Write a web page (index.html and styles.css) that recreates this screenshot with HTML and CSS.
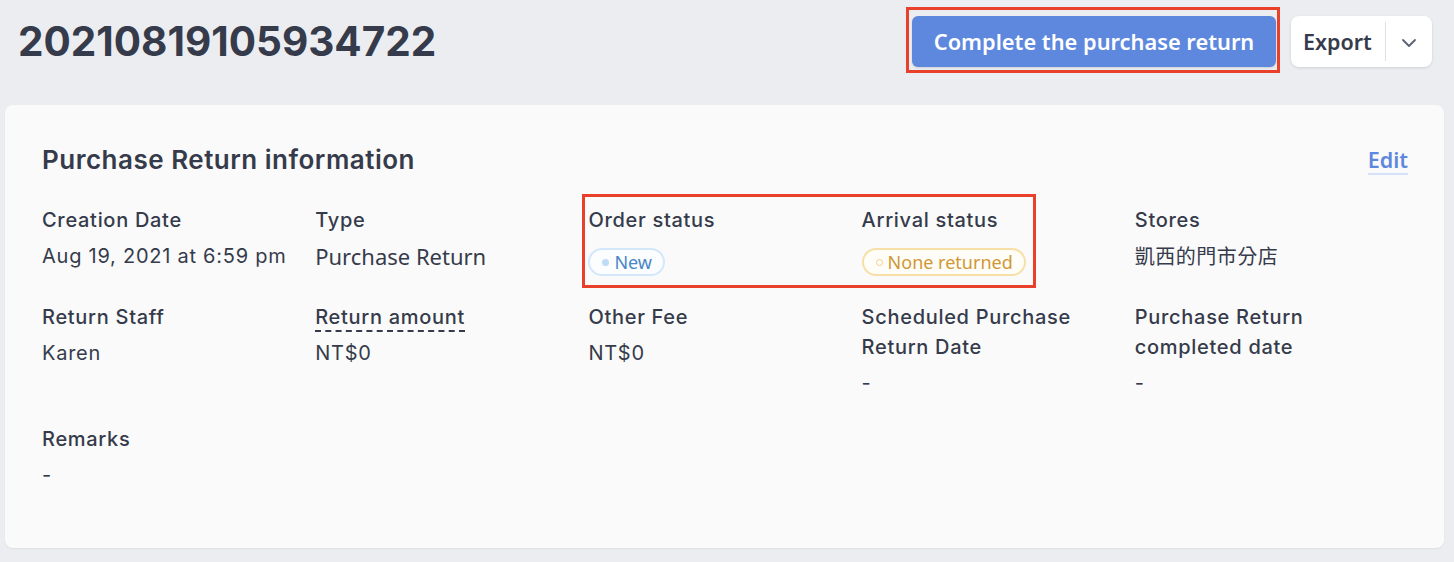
FILE: index.html
```html
<!DOCTYPE html>
<html lang="en">
<head>
<meta charset="utf-8">
<title>20210819105934722</title>
<link rel="stylesheet" href="styles.css">
</head>
<body>
<div class="page">
  <header class="header">
    <h1 class="order-no">20210819105934722</h1>
    <div class="actions">
      <div class="highlight-btn">
        <button class="btn-primary">Complete the purchase return</button>
      </div>
      <div class="export">
        <span class="export-label">Export</span>
        <span class="export-divider"></span>
        <span class="export-caret">
          <svg width="16" height="10" viewBox="0 0 16 10"><path d="M2 2 L8 8 L14 2" fill="none" stroke="#5b6172" stroke-width="1.8" stroke-linecap="round" stroke-linejoin="round"/></svg>
        </span>
      </div>
    </div>
  </header>

  <section class="card">
    <div class="card-head">
      <h2 class="card-title">Purchase Return information</h2>
      <a class="edit">Edit</a>
    </div>
    <div class="grid">
      <div class="field">
        <div class="label">Creation Date</div>
        <div class="value">Aug 19, 2021 at 6:59 pm</div>
      </div>
      <div class="field">
        <div class="label">Type</div>
        <div class="value alt">Purchase Return</div>
      </div>
      <div class="field">
        <div class="label">Order status</div>
        <div class="value"><span class="badge badge-blue"><span class="dot"></span>New</span></div>
      </div>
      <div class="field">
        <div class="label">Arrival status</div>
        <div class="value"><span class="badge badge-yellow"><span class="dot"></span>None returned</span></div>
      </div>
      <div class="field">
        <div class="label">Stores</div>
        <div class="value cjk">凱西的門市分店</div>
      </div>

      <div class="field">
        <div class="label">Return Staff</div>
        <div class="value">Karen</div>
      </div>
      <div class="field">
        <div class="label"><span class="dotted">Return amount</span></div>
        <div class="value">NT$0</div>
      </div>
      <div class="field">
        <div class="label">Other Fee</div>
        <div class="value">NT$0</div>
      </div>
      <div class="field">
        <div class="label">Scheduled Purchase Return Date</div>
        <div class="value">-</div>
      </div>
      <div class="field">
        <div class="label">Purchase Return completed date</div>
        <div class="value">-</div>
      </div>

      <div class="field">
        <div class="label">Remarks</div>
        <div class="value">-</div>
      </div>
    </div>
    <div class="highlight-box"></div>
  </section>
</div>
</body>
</html>
```

FILE: styles.css
```css
* { box-sizing: border-box; }

html, body {
  margin: 0;
  padding: 0;
  background: #ecedf0;
}

body {
  font-family: Inter, "Noto Sans", "Noto Sans CJK TC", sans-serif;
  color: #363b4b;
  width: 1454px;
  height: 562px;
  overflow: hidden;
}

.page {
  padding: 0 10px 0 5px;
}

.header {
  display: flex;
  align-items: center;
  justify-content: space-between;
  padding: 7px 12px 0 13px;
  height: 73px;
}

.order-no {
  margin: 0;
  font-size: 40.5px;
  font-weight: 700;
  color: #363b4b;
  line-height: 48px;
  margin-top: 4px;
}

.actions {
  display: flex;
  align-items: center;
  gap: 11px;
}

.highlight-btn {
  border: 3px solid #e8402b;
  padding: 6px 1px 3px 3px;
}

.btn-primary {
  display: block;
  width: 364px;
  height: 51px;
  border: none;
  border-radius: 6px;
  background: #5e88de;
  color: #ffffff;
  font-family: "Noto Sans", "Open Sans", sans-serif;
  font-size: 21.8px;
  font-weight: 600;
  padding: 0;
  box-shadow: 0 1px 2px rgba(0,0,0,0.12);
}

.export {
  display: flex;
  align-items: center;
  height: 51px;
  width: 141px;
  background: #ffffff;
  border-radius: 8px;
  box-shadow: 0 1px 3px rgba(0,0,0,0.12);
  margin-top: 3px;
}

.export-label {
  font-family: "Noto Sans", "Open Sans", sans-serif;
  font-size: 21.5px;
  font-weight: 600;
  color: #363b4b;
  padding-left: 12px;
  width: 94px;
}

.export-divider {
  width: 1px;
  height: 39px;
  background: #dfe1e6;
}

.export-caret {
  flex: 1;
  display: flex;
  justify-content: center;
  align-items: center;
  padding-top: 2px;
}

.card {
  position: relative;
  margin-top: 32px;
  background: #fafafa;
  border-radius: 8px;
  box-shadow: 0 1px 2px rgba(0,0,0,0.06);
  padding: 40px 36px 58px 37px;
}

.card-head {
  display: flex;
  justify-content: space-between;
  align-items: center;
  height: 30px;
}

.card-title {
  margin: 0;
  font-size: 26px;
  font-weight: 600;
  letter-spacing: 0.5px;
  color: #363b4b;
  line-height: 30px;
}

.edit {
  font-family: "Noto Sans", "Open Sans", sans-serif;
  font-size: 21.5px;
  font-weight: 600;
  color: #5e88de;
  line-height: 26px;
  border-bottom: 2px solid #d4e1f8;
  margin-top: 2px;
}

.grid {
  margin-top: 30px;
  display: grid;
  grid-template-columns: repeat(5, 1fr);
  row-gap: 26px;
}

.field {
  display: flex;
  flex-direction: column;
  gap: 6px;
  padding-right: 20px;
}

.label {
  font-size: 20px;
  font-weight: 500;
  letter-spacing: 0.7px;
  line-height: 30px;
  color: #363b4b;
}

.dotted {
  border-bottom: 2px dashed #363b4b;
  padding-bottom: 1px;
}

.value {
  font-size: 20px;
  font-weight: 400;
  letter-spacing: 0.75px;
  line-height: 30px;
  color: #363b4b;
}

.value.alt {
  font-family: "Noto Sans", "Open Sans", sans-serif;
  font-size: 22px;
  letter-spacing: 0;
}

.value.cjk {
  font-family: "Noto Sans CJK TC", sans-serif;
  letter-spacing: 0.5px;
}

.badge {
  display: inline-flex;
  align-items: center;
  height: 28px;
  margin-top: 7px;
  padding: 0 11px 0 12px;
  border-radius: 14px;
  border: 2px solid;
  font-family: "Noto Sans", "Open Sans", sans-serif;
  font-size: 18px;
  letter-spacing: 0;
  line-height: 24px;
  gap: 5px;
  vertical-align: top;
}

.badge .dot {
  width: 7px;
  height: 7px;
  border-radius: 50%;
  display: inline-block;
}

.badge-blue {
  border-color: #d5e8fb;
  background: #fbfdff;
  color: #4a86c5;
}

.badge-blue .dot {
  background: #bedcf6;
}

.badge-yellow {
  border-color: #f7e0a8;
  background: #fffdf8;
  color: #cf9836;
}

.badge-yellow .dot {
  border: 1.5px solid #f0cf8a;
  background: transparent;
}

.highlight-box {
  position: absolute;
  left: 577px;
  top: 89px;
  width: 454px;
  height: 94px;
  border: 3px solid #e8402b;
  pointer-events: none;
}
```
